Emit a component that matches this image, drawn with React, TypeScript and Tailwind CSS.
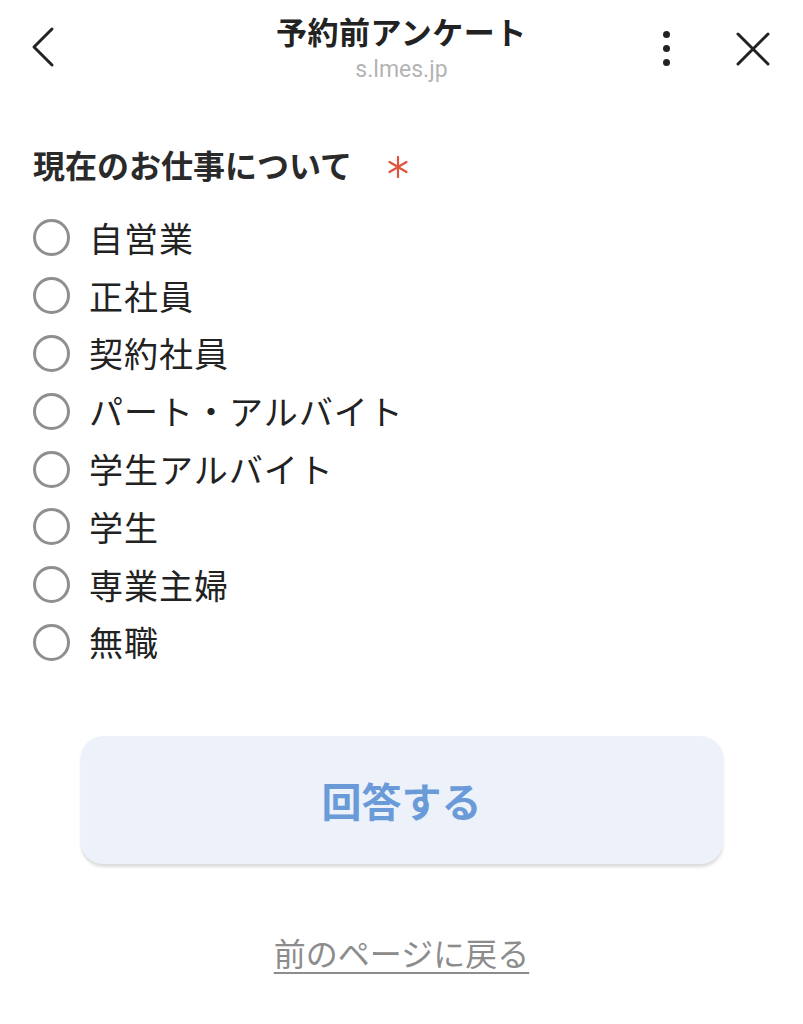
const options = [
  '自営業',
  '正社員',
  '契約社員',
  'パート・アルバイト',
  '学生アルバイト',
  '学生',
  '専業主婦',
  '無職',
];

const font = {
  fontFamily: '"Noto Sans CJK JP", "Noto Sans", sans-serif',
};

export default function App() {
  return (
    <div className="min-h-screen w-[803px] bg-white text-[#222]" style={font}>
      <header className="relative flex h-[100px] items-start justify-center">
        <button type="button" className="absolute left-[28px] top-[26px]">
          <svg width="30" height="42" viewBox="0 0 30 42" fill="none">
            <path d="M24 3L6 21L24 39" stroke="#222" strokeWidth="3" strokeLinecap="round" strokeLinejoin="round" />
          </svg>
        </button>
        <div className="mt-[11px] flex flex-col items-center">
          <h1 className="text-[31px] font-bold leading-[40px] tracking-[0.5px]">予約前アンケート</h1>
          <p className="mt-[6px] text-[23px] leading-[26px] text-[#b4b4b4]" style={{ fontFamily: 'Roboto, sans-serif' }}>
            s.lmes.jp
          </p>
        </div>
        <div className="absolute left-[663px] top-[31px] flex flex-col gap-[7px]">
          <span className="size-[7px] rounded-full bg-[#222]" />
          <span className="size-[7px] rounded-full bg-[#222]" />
          <span className="size-[7px] rounded-full bg-[#222]" />
        </div>
        <button type="button" className="absolute left-[734px] top-[30px]">
          <svg width="38" height="38" viewBox="0 0 38 38" fill="none">
            <path d="M4 4L34 34M34 4L4 34" stroke="#222" strokeWidth="3" strokeLinecap="round" />
          </svg>
        </button>
      </header>

      <section className="px-[33px] pt-[42px]">
        <div className="flex items-center">
          <h2 className="text-[32px] font-bold leading-[44px] text-[#2a2a2a]">現在のお仕事について</h2>
          <svg className="ml-[36px] mt-[6px]" width="20" height="22" viewBox="0 0 20 22" fill="none">
            <path d="M10 1V21M1.5 6L18.5 16M18.5 6L1.5 16" stroke="#e0533c" strokeWidth="2.2" strokeLinecap="round" />
          </svg>
        </div>

        <ul className="mt-[23px] flex flex-col">
          {options.map((label) => (
            <li key={label} className="flex h-[57.8px] items-center">
              <span className="size-[37px] shrink-0 rounded-full border-[3px] border-[#8f8f8f]" />
              <span className="ml-[19px] text-[34px] leading-[40px] tracking-[1px] text-[#222]">{label}</span>
            </li>
          ))}
        </ul>
      </section>

      <div className="mt-[65px] flex justify-center">
        <button
          type="button"
          className="flex h-[128px] w-[642px] items-center justify-center rounded-[22px] bg-[#edf2fa] shadow-[0_3px_3px_rgba(0,0,0,0.14)]"
        >
          <span className="text-[40px] font-bold leading-[50px] text-[#6a9bd8]">回答する</span>
        </button>
      </div>

      <div className="mt-[66px] flex justify-center">
        <a href="#" className="text-[32px] leading-[44px] text-[#8c8c8c] underline decoration-[2px] underline-offset-[6px]">
          前のページに戻る
        </a>
      </div>
    </div>
  );
}
